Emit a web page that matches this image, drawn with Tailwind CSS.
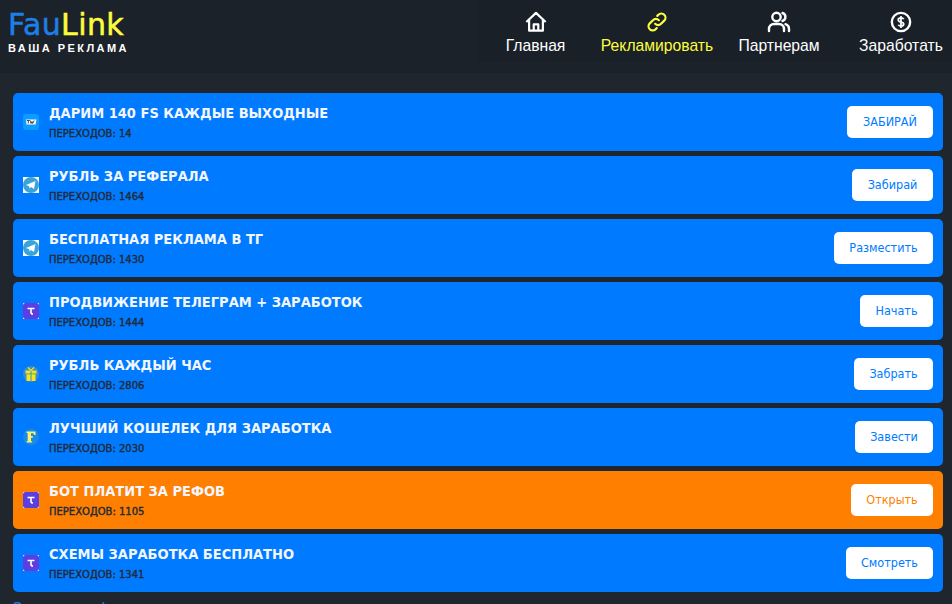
<!DOCTYPE html>
<html lang="ru">
<head>
    <meta charset="UTF-8">
    <title>FauLink</title>
    <script src="https://cdn.jsdelivr.net/npm/@tailwindcss/browser@4"></script>
</head>
<body class="h-[604px] overflow-hidden bg-[#1f262e] font-['DejaVu_Sans_Condensed','DejaVu_Sans',sans-serif]">
    <header class="h-[73px] flex justify-between bg-[#1b222a]">
        <div class="pl-2 pt-[7px]">
            <div class="text-[30px] leading-[36px] tracking-[0.4px] [-webkit-text-stroke:0.5px] font-['DejaVu_Sans',sans-serif]"><span class="text-[#1e7fe6]">Fau</span><span class="text-[#fdfd3f]">Link</span></div>
            <div class="text-[11px] leading-[13px] mt-[-1px] font-bold tracking-[2.45px] text-white font-['Liberation_Sans',sans-serif]">ВАША РЕКЛАМА</div>
        </div>
        <nav class="w-[474px] h-[62px] bg-[#1a2028] flex font-['Liberation_Sans',sans-serif] text-[15.7px] text-white">
            <a class="w-[121px] shrink-0 ml-[-3px] flex flex-col items-center pt-[11px]">
                <svg class="w-[22px] h-[22px]" viewBox="0 0 24 24" fill="none" stroke="currentColor" stroke-width="2.4" stroke-linejoin="round"><path d="M1.500 12 12 2 22.500 12M4.500 9.500V21.500h15V9.500M9.500 21.500v-7h5v7"/></svg>
                <span class="mt-[3px] leading-[20px]">Главная</span>
            </a>
            <a class="w-[122px] shrink-0 flex flex-col items-center pt-[11px] text-[#fdfd3f]">
                <svg class="w-[22px] h-[22px]" viewBox="0 0 24 24" fill="none" stroke="currentColor" stroke-width="2.400" stroke-linecap="round"><path d="M10 14a4.500 4.500 0 0 0 6.400 0l3.500-3.500a4.500 4.500 0 0 0-6.400-6.400l-1.200 1.200M14 10a4.500 4.500 0 0 0-6.400 0l-3.500 3.500a4.500 4.500 0 0 0 6.400 6.400l1.200-1.200"/></svg>
                <span class="mt-[3px] leading-[20px]">Рекламировать</span>
            </a>
            <a class="w-[122px] shrink-0 flex flex-col items-center pt-[11px]">
                <svg class="w-[24px] h-[24px] mt-[-1px]" viewBox="0 0 24 24" fill="none" stroke="currentColor" stroke-width="2.400" stroke-linecap="round"><circle cx="9.500" cy="7" r="4.200"/><path d="M2 21v-2a5 5 0 0 1 5-5h5a5 5 0 0 1 5 5v2M15.500 3a4.200 4.200 0 0 1 0 8M18.500 14.200a5 5 0 0 1 3.500 4.800v2"/></svg>
                <span class="mt-[2px] leading-[20px]">Партнерам</span>
            </a>
            <a class="w-[122px] shrink-0 flex flex-col items-center pt-[11px]">
                <svg class="w-[22px] h-[22px]" viewBox="0 0 24 24" fill="none" stroke="currentColor" stroke-width="2.600"><circle cx="12" cy="12" r="10"/><path d="M15 9c-.4-.9-1.500-1.400-3-1.400-1.800 0-3 .9-3 2.200S10.200 11.600 12 12s3 1 3 2.200-1.200 2.200-3 2.200c-1.500 0-2.600-.5-3-1.400M12 5.500v13" stroke-width="1.900"/></svg>
                <span class="mt-[3px] leading-[20px]">Заработать</span>
            </a>
        </nav>
    </header>
    <main class="pt-5 pl-[13px] pr-[9px] flex flex-col gap-[5px]">
        <div class="h-[58px] rounded-[5px] bg-[#007bff] flex items-center px-[10px]">
            <svg class="w-4 h-4 shrink-0" viewBox="0 0 16 16"><rect width="16" height="16" rx="3" fill="#0a9cff"/><path d="M3 5.500h10.500l-1 5H3.500Z" fill="#fff"/><path d="M3.800 6.500h3M5.300 6.500v3M7.300 6.500l.7 3 1-2 .7 2 1.500-3" stroke="#222" stroke-width=".8" fill="none"/></svg>
            <div class="ml-[10px] flex-1">
                <div class="text-[14.5px] leading-[20px] mt-[-1px] font-bold text-[#f3f6ff]">ДАРИМ 140 FS КАЖДЫЕ ВЫХОДНЫЕ</div>
                <div class="text-[10px] leading-[14px] mt-[4px] [-webkit-text-stroke:0.4px] text-[#212b3a] font-['DejaVu_Sans',sans-serif]">ПЕРЕХОДОВ: 14</div>
            </div>
            <button class="h-8 w-[86px] pt-px rounded-[5px] bg-white text-[12.5px] text-[#007bff]">ЗАБИРАЙ</button>
        </div>
        <div class="h-[58px] rounded-[5px] bg-[#007bff] flex items-center px-[10px]">
            <svg class="w-4 h-4 shrink-0" viewBox="0 0 16 16"><rect width="16" height="16" fill="#fff"/><circle cx="8" cy="8" r="8" fill="#3aa3d8"/><path d="M3 8 12.500 4 11 12 8 10 6.500 11.500 6.200 9.300Z" fill="#fff"/></svg>
            <div class="ml-[10px] flex-1">
                <div class="text-[14.5px] leading-[20px] mt-[-1px] font-bold text-[#f3f6ff]">РУБЛЬ ЗА РЕФЕРАЛА</div>
                <div class="text-[10px] leading-[14px] mt-[4px] [-webkit-text-stroke:0.4px] text-[#212b3a] font-['DejaVu_Sans',sans-serif]">ПЕРЕХОДОВ: 1464</div>
            </div>
            <button class="h-8 w-[81px] pt-px rounded-[5px] bg-white text-[12.5px] text-[#007bff]">Забирай</button>
        </div>
        <div class="h-[58px] rounded-[5px] bg-[#007bff] flex items-center px-[10px]">
            <svg class="w-4 h-4 shrink-0" viewBox="0 0 16 16"><rect width="16" height="16" fill="#fff"/><circle cx="8" cy="8" r="8" fill="#3aa3d8"/><path d="M3 8 12.500 4 11 12 8 10 6.500 11.500 6.200 9.300Z" fill="#fff"/></svg>
            <div class="ml-[10px] flex-1">
                <div class="text-[14.5px] leading-[20px] mt-[-1px] font-bold text-[#f3f6ff]">БЕСПЛАТНАЯ РЕКЛАМА В ТГ</div>
                <div class="text-[10px] leading-[14px] mt-[4px] [-webkit-text-stroke:0.4px] text-[#212b3a] font-['DejaVu_Sans',sans-serif]">ПЕРЕХОДОВ: 1430</div>
            </div>
            <button class="h-8 w-[99px] pt-px rounded-[5px] bg-white text-[12.5px] text-[#007bff]">Разместить</button>
        </div>
        <div class="h-[58px] rounded-[5px] bg-[#007bff] flex items-center px-[10px]">
            <svg class="w-4 h-4 shrink-0" viewBox="0 0 16 16"><rect width="16" height="16" fill="#5b3fe0"/><path d="M0 1.500V0h1.500M14.500 0H16v1.500M0 14.500V16h1.500M14.500 16H16v-1.500" stroke="#fff" fill="none"/><path d="M4.500 5.500h7M8 5.500v4q0 1.500 2 1.500" stroke="#fff" stroke-width="1.600" fill="none"/></svg>
            <div class="ml-[10px] flex-1">
                <div class="text-[14.5px] leading-[20px] mt-[-1px] font-bold text-[#f3f6ff]">ПРОДВИЖЕНИЕ ТЕЛЕГРАМ + ЗАРАБОТОК</div>
                <div class="text-[10px] leading-[14px] mt-[4px] [-webkit-text-stroke:0.4px] text-[#212b3a] font-['DejaVu_Sans',sans-serif]">ПЕРЕХОДОВ: 1444</div>
            </div>
            <button class="h-8 w-[73px] pt-px rounded-[5px] bg-white text-[12.5px] text-[#007bff]">Начать</button>
        </div>
        <div class="h-[58px] rounded-[5px] bg-[#007bff] flex items-center px-[10px]">
            <svg class="w-4 h-4 shrink-0" viewBox="0 0 16 16"><circle cx="8" cy="8" r="8" fill="#3a8dd0"/><path d="M2.500 4.500h11v3h-11ZM3.500 8.300h9V15h-9Z" fill="#f5e614"/><path d="M8 4.500V15" stroke="#3a8dd0"/><path d="M5 1.500 8 4.500l3-3" stroke="#f5e614" stroke-width="1.200" fill="none"/></svg>
            <div class="ml-[10px] flex-1">
                <div class="text-[14.5px] leading-[20px] mt-[-1px] font-bold text-[#f3f6ff]">РУБЛЬ КАЖДЫЙ ЧАС</div>
                <div class="text-[10px] leading-[14px] mt-[4px] [-webkit-text-stroke:0.4px] text-[#212b3a] font-['DejaVu_Sans',sans-serif]">ПЕРЕХОДОВ: 2806</div>
            </div>
            <button class="h-8 w-[79px] pt-px rounded-[5px] bg-white text-[12.5px] text-[#007bff]">Забрать</button>
        </div>
        <div class="h-[58px] rounded-[5px] bg-[#007bff] flex items-center px-[10px]">
            <svg class="w-4 h-4 shrink-0" viewBox="0 0 16 16"><circle cx="8" cy="8" r="8" fill="#1a8ae8"/><path d="M3.500 2.500h9v3.500h-1.500l-.5-1.700H8v2.700h1.800v1.800H8V12l1.200.5v1H3.500v-1l1.200-.5V4.300l-1.200-.5Z" fill="#fdf26a"/></svg>
            <div class="ml-[10px] flex-1">
                <div class="text-[14.5px] leading-[20px] mt-[-1px] font-bold text-[#f3f6ff]">ЛУЧШИЙ КОШЕЛЕК ДЛЯ ЗАРАБОТКА</div>
                <div class="text-[10px] leading-[14px] mt-[4px] [-webkit-text-stroke:0.4px] text-[#212b3a] font-['DejaVu_Sans',sans-serif]">ПЕРЕХОДОВ: 2030</div>
            </div>
            <button class="h-8 w-[78px] pt-px rounded-[5px] bg-white text-[12.5px] text-[#007bff]">Завести</button>
        </div>
        <div class="h-[58px] rounded-[5px] bg-[#ff7f00] flex items-center px-[10px]">
            <svg class="w-4 h-4 shrink-0" viewBox="0 0 16 16"><rect width="16" height="16" fill="#5b3fe0"/><path d="M0 1.500V0h1.500M14.500 0H16v1.500M0 14.500V16h1.500M14.500 16H16v-1.500" stroke="#fff" fill="none"/><path d="M4.500 5.500h7M8 5.500v4q0 1.500 2 1.500" stroke="#fff" stroke-width="1.600" fill="none"/></svg>
            <div class="ml-[10px] flex-1">
                <div class="text-[14.5px] leading-[20px] mt-[-1px] font-bold text-[#f3f6ff]">БОТ ПЛАТИТ ЗА РЕФОВ</div>
                <div class="text-[10px] leading-[14px] mt-[4px] [-webkit-text-stroke:0.4px] text-[#212b3a] font-['DejaVu_Sans',sans-serif]">ПЕРЕХОДОВ: 1105</div>
            </div>
            <button class="h-8 w-[82px] pt-px rounded-[5px] bg-white text-[12.5px] text-[#ff7f00]">Открыть</button>
        </div>
        <div class="h-[58px] rounded-[5px] bg-[#007bff] flex items-center px-[10px]">
            <svg class="w-4 h-4 shrink-0" viewBox="0 0 16 16"><rect width="16" height="16" fill="#5b3fe0"/><path d="M0 1.500V0h1.500M14.500 0H16v1.500M0 14.500V16h1.500M14.500 16H16v-1.500" stroke="#fff" fill="none"/><path d="M4.500 5.500h7M8 5.500v4q0 1.500 2 1.500" stroke="#fff" stroke-width="1.600" fill="none"/></svg>
            <div class="ml-[10px] flex-1">
                <div class="text-[14.5px] leading-[20px] mt-[-1px] font-bold text-[#f3f6ff]">СХЕМЫ ЗАРАБОТКА БЕСПЛАТНО</div>
                <div class="text-[10px] leading-[14px] mt-[4px] [-webkit-text-stroke:0.4px] text-[#212b3a] font-['DejaVu_Sans',sans-serif]">ПЕРЕХОДОВ: 1341</div>
            </div>
            <button class="h-8 w-[87px] pt-px rounded-[5px] bg-white text-[12.5px] text-[#007bff]">Смотреть</button>
        </div>
        <div class="text-[15px] leading-[20px] mt-[2px] text-[#1e7fe6] font-['DejaVu_Sans',sans-serif]">Заявки на форуме</div>
    </main>
</body>
</html>
